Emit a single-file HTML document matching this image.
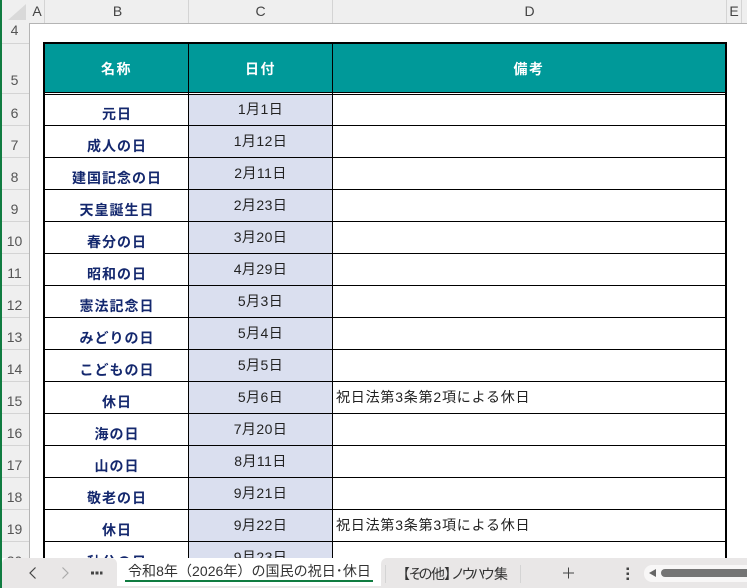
<!DOCTYPE html>
<html lang="ja"><head><meta charset="utf-8"><style>
html,body{margin:0;padding:0;background:#fff}
#p{position:relative;width:747px;height:588px;overflow:hidden;background:#fff;font-family:"Liberation Sans","Noto Sans CJK JP",sans-serif}
#p div{position:absolute;box-sizing:border-box}
.k{background:#000}
.h{color:#444;font-size:14px;text-align:center;line-height:16px}
.s{background:#d4d4d4}
.b{left:45px;width:143px;text-align:center;font-weight:bold;color:#14286e;font-size:14px;line-height:18px;letter-spacing:1px;padding-left:1px}
.c{left:189px;width:143px;text-align:center;color:#222;font-size:14px;line-height:18px;letter-spacing:.45px}
.d{left:336px;color:#222;font-size:14px;line-height:18px;letter-spacing:.8px;white-space:nowrap}
.r{left:0;width:29px;text-align:center;color:#555;font-size:14px;line-height:16px}
.l{left:45px;width:681px;height:1px;background:#000}
.f{background:#dadfef;left:189px;width:143px}
.t{text-align:center;color:#fff;font-weight:bold;font-size:14px;line-height:18px;letter-spacing:1.5px;top:60px}
.g{left:0;top:565px;width:747px;height:18px;font-size:14px;line-height:18px;color:#333}
.g span{position:absolute;top:0}
</style></head><body><div id="p">
<div style="left:0;top:0;width:747px;height:23px;background:#efefef"></div>
<div style="left:0;top:23px;width:29px;height:565px;background:#efefef"></div>
<div style="left:29px;top:23px;width:718px;height:1px;background:#b4b4b4"></div>
<div style="left:29px;top:23px;width:1px;height:565px;background:#b4b4b4"></div>
<div style="left:0;top:0;width:2px;height:588px;background:#107c41"></div>
<div style="left:8px;top:4px;width:18px;height:16px;background:#d9d9d9;clip-path:polygon(100% 0,100% 100%,0 100%)"></div>
<div class="s" style="left:44px;top:0;width:1px;height:23px"></div>
<div class="s" style="left:188px;top:0;width:1px;height:23px"></div>
<div class="s" style="left:332px;top:0;width:1px;height:23px"></div>
<div class="s" style="left:726px;top:0;width:1px;height:23px"></div>
<div class="s" style="left:741px;top:0;width:1px;height:23px"></div>
<div class="h" style="left:30px;top:3px;width:14px">A</div>
<div class="h" style="left:46px;top:3px;width:143px">B</div>
<div class="h" style="left:189px;top:3px;width:143px">C</div>
<div class="h" style="left:333px;top:3px;width:393px">D</div>
<div class="h" style="left:727px;top:3px;width:14px">E</div>

<div class="s" style="left:2px;top:43px;width:27px;height:1px"></div>
<div class="s" style="left:2px;top:93px;width:27px;height:1px"></div>
<div class="s" style="left:2px;top:125px;width:27px;height:1px"></div>
<div class="s" style="left:2px;top:157px;width:27px;height:1px"></div>
<div class="s" style="left:2px;top:189px;width:27px;height:1px"></div>
<div class="s" style="left:2px;top:221px;width:27px;height:1px"></div>
<div class="s" style="left:2px;top:253px;width:27px;height:1px"></div>
<div class="s" style="left:2px;top:285px;width:27px;height:1px"></div>
<div class="s" style="left:2px;top:317px;width:27px;height:1px"></div>
<div class="s" style="left:2px;top:349px;width:27px;height:1px"></div>
<div class="s" style="left:2px;top:381px;width:27px;height:1px"></div>
<div class="s" style="left:2px;top:413px;width:27px;height:1px"></div>
<div class="s" style="left:2px;top:445px;width:27px;height:1px"></div>
<div class="s" style="left:2px;top:477px;width:27px;height:1px"></div>
<div class="s" style="left:2px;top:509px;width:27px;height:1px"></div>
<div class="s" style="left:2px;top:541px;width:27px;height:1px"></div>
<div class="r" style="top:22px">4</div>
<div class="r" style="top:72px">5</div>
<div class="r" style="top:105px">6</div>
<div class="r" style="top:137px">7</div>
<div class="r" style="top:169px">8</div>
<div class="r" style="top:201px">9</div>
<div class="r" style="top:233px">10</div>
<div class="r" style="top:265px">11</div>
<div class="r" style="top:297px">12</div>
<div class="r" style="top:329px">13</div>
<div class="r" style="top:361px">14</div>
<div class="r" style="top:393px">15</div>
<div class="r" style="top:425px">16</div>
<div class="r" style="top:457px">17</div>
<div class="r" style="top:489px">18</div>
<div class="r" style="top:521px">19</div>
<div class="r" style="top:553px">20</div>

<div style="left:45px;top:44px;width:681px;height:48px;background:#009999"></div>
<div class="f" style="top:94px;height:470px"></div>
<div class="k" style="left:43px;top:42px;width:684px;height:2px"></div>
<div class="k" style="left:43px;top:42px;width:2px;height:520px"></div>
<div class="k" style="left:725px;top:42px;width:2px;height:520px"></div>
<div class="k" style="left:188px;top:44px;width:1px;height:520px"></div>
<div class="k" style="left:332px;top:44px;width:1px;height:520px"></div>
<div class="k" style="left:45px;top:92px;width:681px;height:1px"></div>
<div class="k" style="left:45px;top:94px;width:681px;height:1px"></div>
<div class="l" style="top:125px"></div><div class="l" style="top:157px"></div><div class="l" style="top:189px"></div><div class="l" style="top:221px"></div><div class="l" style="top:253px"></div><div class="l" style="top:285px"></div><div class="l" style="top:317px"></div><div class="l" style="top:349px"></div><div class="l" style="top:381px"></div><div class="l" style="top:413px"></div><div class="l" style="top:445px"></div><div class="l" style="top:477px"></div><div class="l" style="top:509px"></div><div class="l" style="top:541px"></div>

<div class="t" style="left:45px;width:143px">名称</div>
<div class="t" style="left:189px;width:143px">日付</div>
<div class="t" style="left:333px;width:392px">備考</div>

<div class="b" style="top:105px">元日</div><div class="c" style="top:100px">1月1日</div>
<div class="b" style="top:137px">成人の日</div><div class="c" style="top:132px">1月12日</div>
<div class="b" style="top:169px">建国記念の日</div><div class="c" style="top:164px">2月11日</div>
<div class="b" style="top:201px">天皇誕生日</div><div class="c" style="top:196px">2月23日</div>
<div class="b" style="top:233px">春分の日</div><div class="c" style="top:228px">3月20日</div>
<div class="b" style="top:265px">昭和の日</div><div class="c" style="top:260px">4月29日</div>
<div class="b" style="top:297px">憲法記念日</div><div class="c" style="top:292px">5月3日</div>
<div class="b" style="top:329px">みどりの日</div><div class="c" style="top:324px">5月4日</div>
<div class="b" style="top:361px">こどもの日</div><div class="c" style="top:356px">5月5日</div>
<div class="b" style="top:393px">休日</div><div class="c" style="top:388px">5月6日</div>
<div class="b" style="top:425px">海の日</div><div class="c" style="top:420px">7月20日</div>
<div class="b" style="top:457px">山の日</div><div class="c" style="top:452px">8月11日</div>
<div class="b" style="top:489px">敬老の日</div><div class="c" style="top:484px">9月21日</div>
<div class="b" style="top:521px">休日</div><div class="c" style="top:516px">9月22日</div>
<div class="b" style="top:553px">秋分の日</div><div class="c" style="top:548px">9月23日</div>
<div class="d" style="top:388px">祝日法第3条第2項による休日</div>
<div class="d" style="top:516px">祝日法第3条第3項による休日</div>

<div style="left:0;top:558px;width:747px;height:30px;background:#fff"></div>
<div style="left:2px;top:558px;width:115px;height:30px;background:#e9e7e7;border-radius:6px 6px 0 0"></div>
<div style="left:381px;top:558px;width:366px;height:30px;background:#e9e7e7;border-radius:6px 0 0 0"></div>
<div style="left:117px;top:586px;width:264px;height:2px;background:#e9e7e7"></div>
<div style="left:0;top:558px;width:2px;height:30px;background:#107c41"></div>
<svg style="position:absolute;left:0;top:558px" width="120" height="30" viewBox="0 0 120 30" fill="none">
<path d="M35.500 9.500 L30 15 L35.500 20.500" stroke="#444" stroke-width="1.200"/>
<path d="M62.500 9.500 L68 15 L62.500 20.500" stroke="#aaa" stroke-width="1.200"/>
<rect x="91" y="13.500" width="3" height="3" fill="#444"/><rect x="95.500" y="13.500" width="3" height="3" fill="#444"/><rect x="100" y="13.500" width="2.500" height="3" fill="#444"/>
</svg>
<div style="left:125px;top:580px;width:248px;height:2px;background:#107c41"></div>
<div style="left:128px;top:562px;font-size:14px;line-height:18px;color:#333;white-space:nowrap;letter-spacing:.05px">令和8年（2026年）の国民の祝日･休日</div>
<div class="s" style="left:385px;top:565px;width:1px;height:18px"></div>
<div class="g"><span style="left:396px">【</span><span style="left:408.500px">そ</span><span style="left:418.500px">の</span><span style="left:431px">他</span><span style="left:444px">】</span><span style="left:451px">ノ</span><span style="left:461.500px">ウ</span><span style="left:471px">ハ</span><span style="left:481px">ウ</span><span style="left:494px">集</span></div>
<div class="s" style="left:520px;top:565px;width:1px;height:18px"></div>
<svg style="position:absolute;left:560px;top:565px" width="16" height="16" viewBox="0 0 16 16"><path d="M8.500 2.500 V13.500 M3 8 H14" stroke="#444" stroke-width="1"/></svg>
<svg style="position:absolute;left:622px;top:565px" width="12" height="18" viewBox="0 0 12 18"><rect x="4.500" y="2.500" width="2.500" height="2.500" fill="#444"/><rect x="4.500" y="7.500" width="2.500" height="2.500" fill="#444"/><rect x="4.500" y="12.500" width="2.500" height="2.500" fill="#444"/></svg>
<div style="left:644px;top:565px;width:103px;height:17px;background:#f8f7f7;border-radius:8px 0 0 8px"></div>
<div style="left:649px;top:569px;width:7px;height:8px;background:#666;clip-path:polygon(0 50%,100% 0,100% 100%)"></div>
<div style="left:661px;top:569px;width:86px;height:8px;background:#757575;border-radius:4px 0 0 4px"></div>
</div></body></html>
